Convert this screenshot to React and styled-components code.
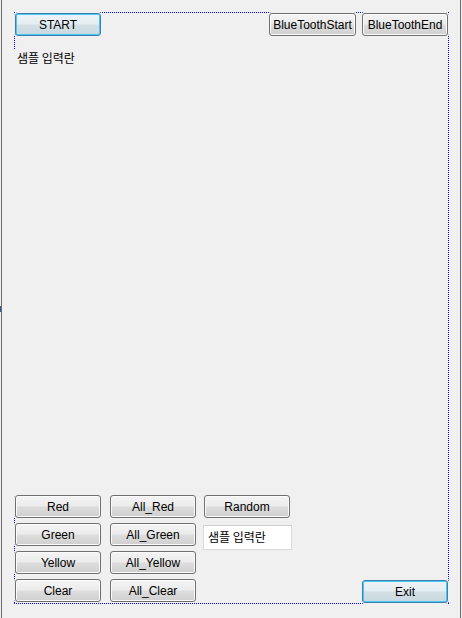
import React from "react";
import styled, { createGlobalStyle, css } from "styled-components";

const GlobalStyle = createGlobalStyle`
  html, body {
    margin: 0;
    padding: 0;
    background: #f0f0f0;
  }
  * { box-sizing: border-box; }
`;

const Window = styled.div`
  position: relative;
  width: 462px;
  height: 618px;
  padding: 0 1px;
  background: #f0f0f0;
  overflow: hidden;
`;

const Grip = styled.div`
  position: absolute;
  left: 0;
  top: 306px;
  width: 1px;
  height: 6px;
  background: #3b5b8c;
`;

const Form = styled.div`
  height: 100%;
  border-left: 1px solid #6a6a6a;
  border-right: 1px solid #6a6a6a;
  padding: 12px 0 0 12px;
`;

const dotsX = "linear-gradient(to right, #0000ff 50%, transparent 50%)";
const dotsY = "linear-gradient(to bottom, #0000ff 50%, transparent 50%)";

const Layout = styled.div`
  width: 435px;
  height: 592px;
  padding: 1px;
  background:
    ${dotsX} 0 0 / 2px 1px repeat-x,
    ${dotsX} 0 100% / 2px 1px repeat-x,
    ${dotsY} 0 0 / 1px 2px repeat-y,
    ${dotsY} 100% 0 / 1px 2px repeat-y,
    #f0f0f0;
  display: flex;
  flex-direction: column;
`;

const TopRow = styled.div`
  display: flex;
  align-items: flex-start;
  height: 23px;
`;

const Spacer = styled.div`
  flex: 1;
`;

const Button = styled.button`
  width: ${(p) => p.$w || 86}px;
  height: 23px;
  margin: ${(p) => p.$m || 0};
  padding: 0;
  font-family: "Liberation Sans", Arial, sans-serif;
  font-size: 12px;
  color: #000;
  border: 1px solid #707070;
  border-radius: 3px;
  background: linear-gradient(
    to bottom,
    #f4f4f4 0%,
    #ebebeb 48%,
    #dddddd 52%,
    #cfcfcf 100%
  );
  box-shadow: inset 0 0 0 1px #fbfbfb, 0 0 0 1px #f0f0f0;
  cursor: default;
  ${(p) =>
    p.$default &&
    css`
      border-color: #3c7fb1;
      background: linear-gradient(
        to bottom,
        #eef4f7 0%,
        #e4edf2 48%,
        #d3e0e6 52%,
        #c9d8df 100%
      );
      box-shadow: inset 0 0 0 1px #4cc6f2, 0 0 0 1px #f0f0f0;
    `}
`;

const Body = styled.div`
  flex: 1;
  margin: 14px 0 0 -1px;
  background: #f0f0f0;
  padding-left: 3px;
`;

const Label = styled.div`
  font-family: "Noto Sans CJK KR", "Noto Sans", sans-serif;
  font-size: 12px;
  line-height: 15px;
  color: #000;
`;

const Grid = styled.div`
  display: grid;
  grid-template-columns: 95px 94px 86px 1fr;
  grid-template-rows: repeat(4, 23px);
  row-gap: 5px;
  margin-bottom: 1px;
`;

const Cell = styled.div`
  grid-column: ${(p) => p.$col};
  grid-row: ${(p) => p.$row};
  justify-self: ${(p) => p.$justify || "start"};
  align-self: start;
`;

const Field = styled.input`
  display: block;
  width: 89px;
  height: 25px;
  margin: 2px 0 0 -1px;
  padding: 0 0 3px 4px;
  border: 1px solid #dadada;
  border-top-color: #cfcfcf;
  background: #fff;
  font-family: "Noto Sans CJK KR", "Noto Sans", sans-serif;
  font-size: 12px;
  color: #000;
  outline: none;
`;

const gridButtons = [
  ["Red", "All_Red"],
  ["Green", "All_Green"],
  ["Yellow", "All_Yellow"],
  ["Clear", "All_Clear"],
];

export default function App() {
  return (
    <>
      <GlobalStyle />
      <Window>
        <Grip />
        <Form>
          <Layout>
            <TopRow>
              <Button $default>START</Button>
              <Spacer />
              <Button $w={87} $m="0 6px 0 0">
                BlueToothStart
              </Button>
              <Button>BlueToothEnd</Button>
            </TopRow>
            <Body>
              <Label>샘플 입력란</Label>
            </Body>
            <Grid>
              {gridButtons.map(([a, b], i) => (
                <React.Fragment key={a}>
                  <Cell $col={1} $row={i + 1}>
                    <Button>{a}</Button>
                  </Cell>
                  <Cell $col={2} $row={i + 1}>
                    <Button>{b}</Button>
                  </Cell>
                </React.Fragment>
              ))}
              <Cell $col={3} $row={1}>
                <Button>Random</Button>
              </Cell>
              <Cell $col={3} $row={2}>
                <Field defaultValue="샘플 입력란" readOnly />
              </Cell>
              <Cell $col={4} $row={4} $justify="end">
                <Button $default $m="1px 0 0 0">
                  Exit
                </Button>
              </Cell>
            </Grid>
          </Layout>
        </Form>
      </Window>
    </>
  );
}
